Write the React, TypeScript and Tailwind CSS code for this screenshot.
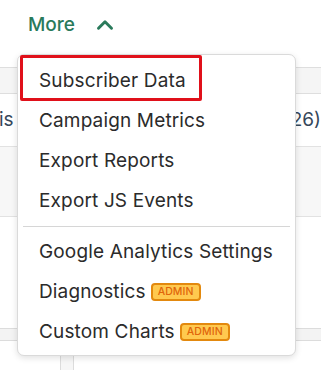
import { ChevronUp } from "lucide-react";

const font = { fontFamily: "Inter, 'Noto Sans', sans-serif" };

const topItems = ["Subscriber Data", "Campaign Metrics", "Export Reports", "Export JS Events"];
const bottomItems = [
  { label: "Google Analytics Settings", admin: false },
  { label: "Diagnostics", admin: true },
  { label: "Custom Charts", admin: true },
];

function AdminBadge() {
  return (
    <span className="ml-[5px] inline-flex h-[18px] items-center rounded-[4px] border-2 border-[#e3890e] bg-[#ffc94f] px-[5px] text-[10.5px] font-medium leading-none tracking-[0.1px] text-[#e0650a]">
      ADMIN
    </span>
  );
}

function MenuItem({ label, admin }: { label: string; admin?: boolean }) {
  return (
    <div className="flex h-10 items-center px-[21px] text-[19px] tracking-[0.15px] text-[#2b2b2b]">
      <span>{label}</span>
      {admin && <AdminBadge />}
    </div>
  );
}

export default function App() {
  return (
    <div className="relative h-[370px] w-[321px] overflow-hidden bg-white" style={font}>
      <div className="flex h-[67px] items-start pl-[28px] pt-[11px]">
        <button className="flex items-center gap-[17px] text-[19px] font-medium text-[#2a7a5b]">
          More
          <ChevronUp className="h-[26px] w-[26px]" strokeWidth={2.7} />
        </button>
      </div>

      <div className="h-[27px] border-y border-[#dedede] bg-[#f5f5f5]" />
      <div className="flex h-[53px] items-center justify-between border-b border-[#e2e2e2] text-[19px] text-[#35475a]">
        <span className="-ml-[1px]">is</span>
        <span>26)</span>
      </div>
      <div className="h-[70px] border-b border-[#e2e2e2] bg-[#f7f7f7]" />
      <div className="h-[111px] bg-white" />
      <div className="h-[13px] border-y border-[#dcdcdc] bg-[#f3f3f3]" />
      <div className="flex h-[30px]">
        <div className="ml-[60px] w-[14px] border-x border-[#dcdcdc] bg-[#f6f6f6]" />
      </div>

      <div className="absolute left-[17px] top-[54px] w-[279px] rounded-[7px] border border-[#dadada] bg-white pb-[3px] pt-[6px] shadow-[0_2px_6px_rgba(0,0,0,0.12)]">
        {topItems.map((t) => (
          <MenuItem key={t} label={t} />
        ))}
        <div className="mx-[5px] my-[5px] h-px bg-[#d6d6d6]" />
        {bottomItems.map((i) => (
          <MenuItem key={i.label} label={i.label} admin={i.admin} />
        ))}
        <div className="absolute left-[2px] top-[0px] h-[46px] w-[182px] rounded-[2px] border-[3px] border-[#e0101a]" />
      </div>
    </div>
  );
}
